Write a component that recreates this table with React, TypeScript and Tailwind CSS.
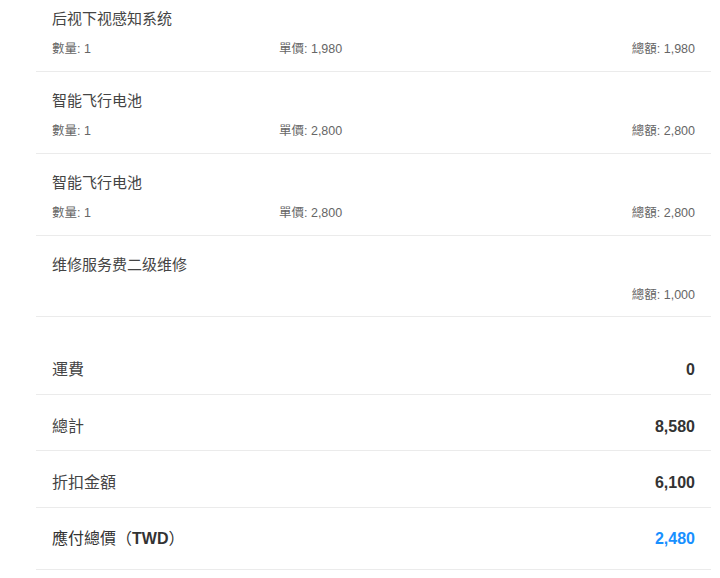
const items = [
  { name: "后视下视感知系统", qty: 1, price: "1,980", total: "1,980" },
  { name: "智能飞行电池", qty: 1, price: "2,800", total: "2,800" },
  { name: "智能飞行电池", qty: 1, price: "2,800", total: "2,800" },
  { name: "维修服务费二级维修", qty: null, price: null, total: "1,000" },
]

const summary = [
  { label: "運費", value: "0", cls: "pt-[20px] pb-[12px]" },
  { label: "總計", value: "8,580", cls: "pt-[20px] pb-[11px]" },
  { label: "折扣金額", value: "6,100", cls: "pt-[20px] pb-[12px]" },
]

export default function App() {
  return (
    <main
      className="h-[578px] overflow-hidden bg-white pl-[36px] pr-[9px]"
      style={{ fontFamily: '"Liberation Sans", "Noto Sans CJK SC", sans-serif' }}
    >
      <div className="-mt-[10px]">
        {items.map((item, i) => (
          <div
            key={i}
            className={`border-b border-[#ebebeb] px-4 pt-[18px] ${i === items.length - 1 ? "pb-[12px]" : "pb-[13px]"}`}
          >
            <p className="text-[15px] leading-[22px] text-[#444]">{item.name}</p>
            <div className="mt-[10px] grid grid-cols-[227px_1fr_auto] text-[12.5px] leading-[18px] text-[#666]">
              <span>{item.qty !== null ? `數量: ${item.qty}` : ""}</span>
              <span>{item.price !== null ? `單價: ${item.price}` : ""}</span>
              <span className="text-right">總額: {item.total}</span>
            </div>
          </div>
        ))}
      </div>

      {/* 費用匯總 */}
      <div className="mt-[21px]">
        {summary.map((row) => (
          <div
            key={row.label}
            className={`flex items-center justify-between border-b border-[#ebebeb] px-4 text-[16px] leading-[24px] ${row.cls}`}
          >
            <span className="text-[#444]">{row.label}</span>
            <span className="font-bold text-[#333]">{row.value}</span>
          </div>
        ))}
        <div className="flex items-center justify-between border-b border-[#ebebeb] px-4 pt-[19px] pb-[18px] text-[16px] leading-[24px]">
          <span className="text-[#333]">
            應付總價（<span className="font-bold">TWD</span>）
          </span>
          <span className="font-bold text-[#1890ff]">2,480</span>
        </div>
      </div>
    </main>
  )
}
